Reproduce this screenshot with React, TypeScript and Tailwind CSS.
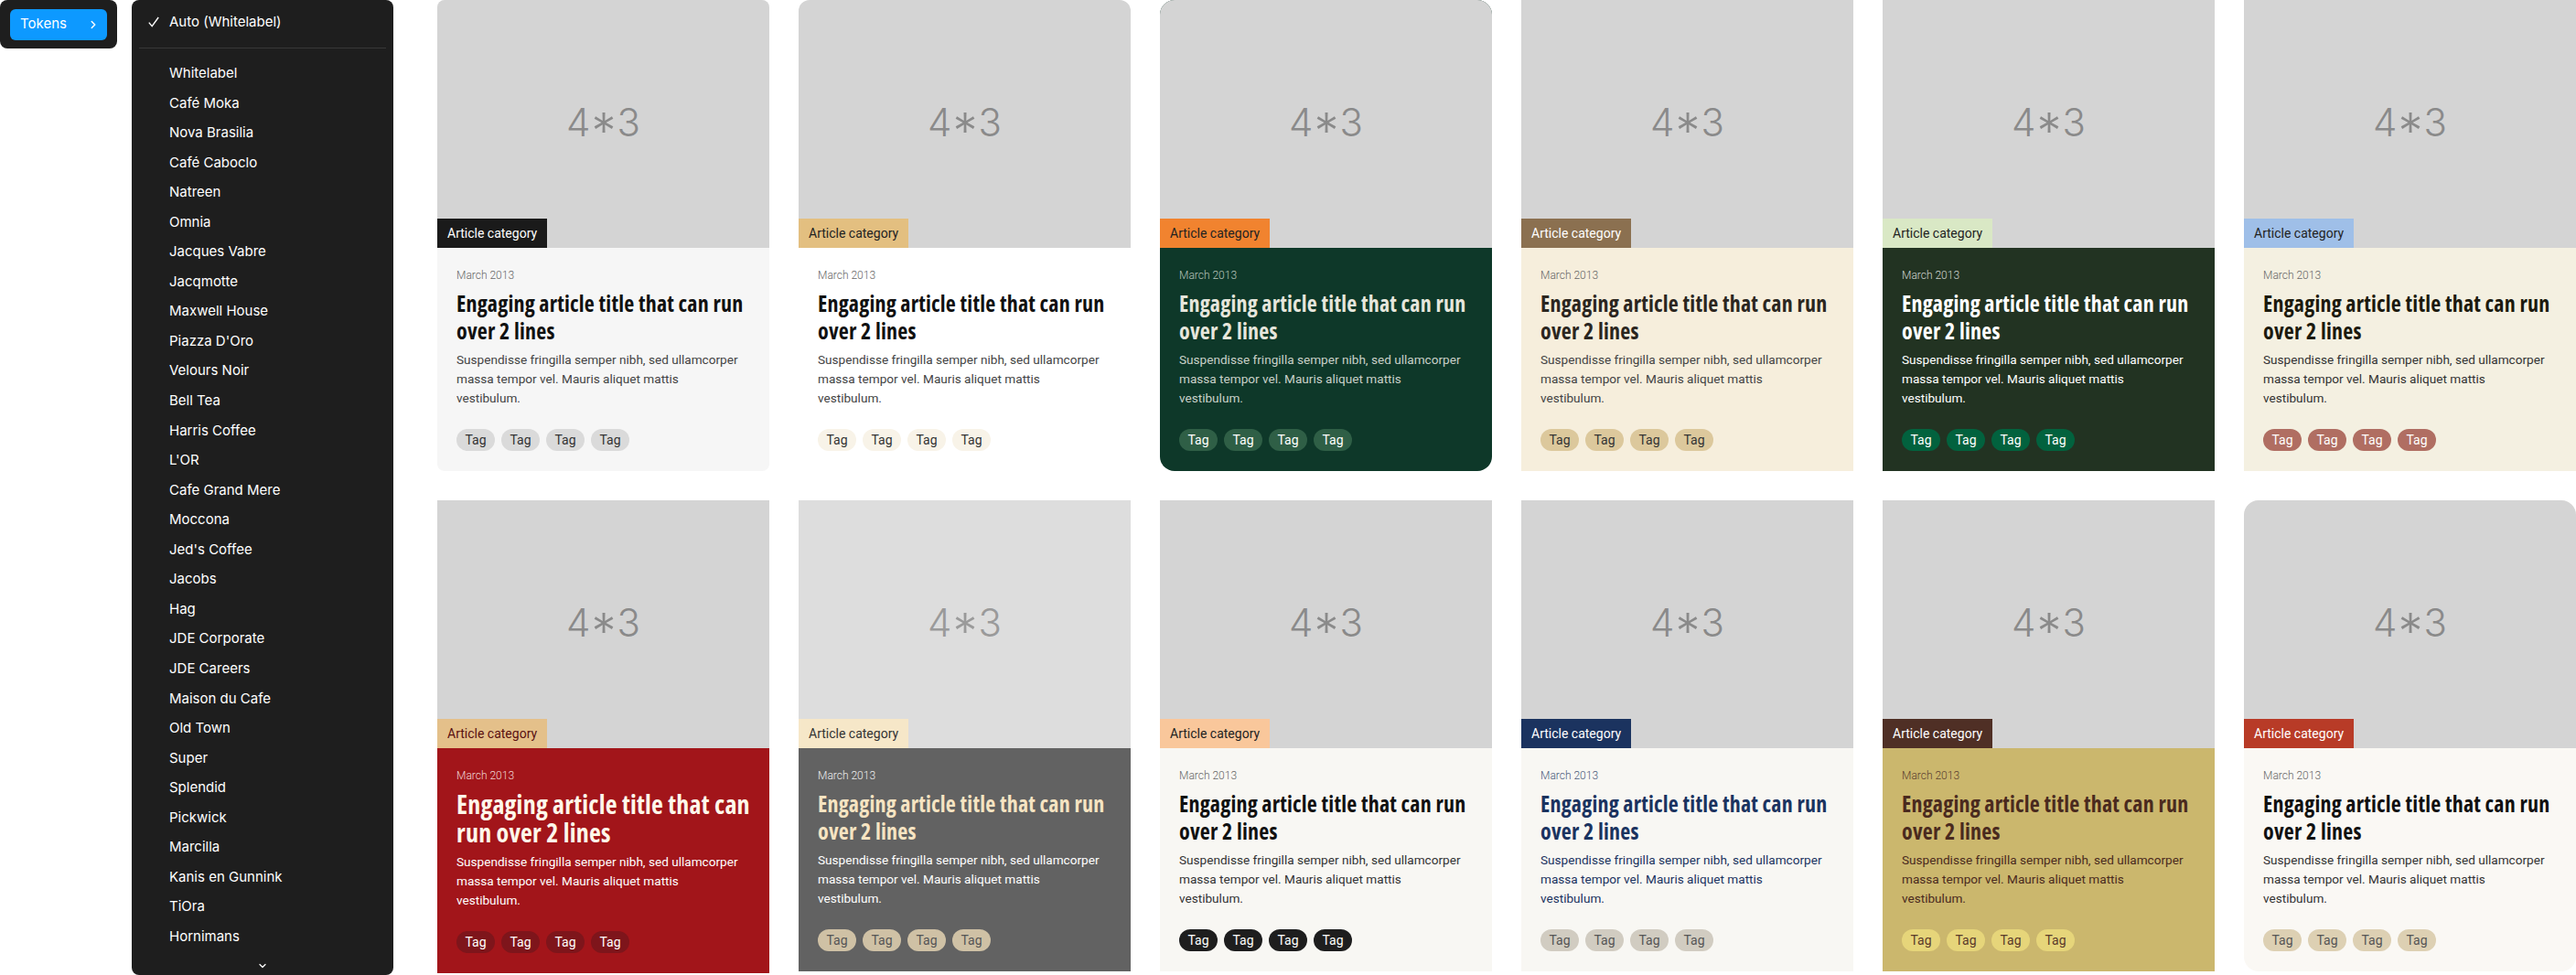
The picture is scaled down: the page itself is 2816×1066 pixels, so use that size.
import { ChevronRight, ChevronDown } from "lucide-react";

interface CardTheme {
  body: string;
  radius: string;
  image: string;
  placeholder: string;
  label: string;
  date: string;
  title: string;
  desc: string;
  tag: string;
  big?: boolean;
}

const brands = [
  "Whitelabel",
  "Café Moka",
  "Nova Brasilia",
  "Café Caboclo",
  "Natreen",
  "Omnia",
  "Jacques Vabre",
  "Jacqmotte",
  "Maxwell House",
  "Piazza D'Oro",
  "Velours Noir",
  "Bell Tea",
  "Harris Coffee",
  "L'OR",
  "Cafe Grand Mere",
  "Moccona",
  "Jed's Coffee",
  "Jacobs",
  "Hag",
  "JDE Corporate",
  "JDE Careers",
  "Maison du Cafe",
  "Old Town",
  "Super",
  "Splendid",
  "Pickwick",
  "Marcilla",
  "Kanis en Gunnink",
  "TiOra",
  "Hornimans",
];

const cards: CardTheme[] = [
  {
    body: "bg-[#f6f6f6]",
    radius: "rounded-lg",
    image: "bg-[#d4d4d4]",
    placeholder: "text-[#8a8a8a]",
    label: "bg-[#1a1a1a] text-white",
    date: "text-[#666666]",
    title: "text-[#111111]",
    desc: "text-[#444444]",
    tag: "bg-[#dadada] text-[#333333]",
  },
  {
    body: "bg-white",
    radius: "rounded-xl",
    image: "bg-[#d4d4d4]",
    placeholder: "text-[#8a8a8a]",
    label: "bg-[#e3bf80] text-[#222222]",
    date: "text-[#666666]",
    title: "text-[#111111]",
    desc: "text-[#444444]",
    tag: "bg-[#f8f3e8] text-[#333333]",
  },
  {
    body: "bg-[#0e3829]",
    radius: "rounded-2xl",
    image: "bg-[#d4d4d4]",
    placeholder: "text-[#8a8a8a]",
    label: "bg-[#f1832f] text-[#222222]",
    date: "text-[#b8c4bc]",
    title: "text-[#e6e6dc]",
    desc: "text-[#c8d0c8]",
    tag: "bg-[#2f5f46] text-white",
  },
  {
    body: "bg-[#f6eedc]",
    radius: "",
    image: "bg-[#d4d4d4]",
    placeholder: "text-[#8a8a8a]",
    label: "bg-[#8b7050] text-white",
    date: "text-[#666666]",
    title: "text-[#2b2620]",
    desc: "text-[#444444]",
    tag: "bg-[#dcc89c] text-[#333333]",
  },
  {
    body: "bg-[#223322]",
    radius: "",
    image: "bg-[#d4d4d4]",
    placeholder: "text-[#8a8a8a]",
    label: "bg-[#d9e8c5] text-[#222222]",
    date: "text-[#d0d4d0]",
    title: "text-white",
    desc: "text-white",
    tag: "bg-[#02623e] text-white",
  },
  {
    body: "bg-[#f4f0e1]",
    radius: "",
    image: "bg-[#d4d4d4]",
    placeholder: "text-[#8a8a8a]",
    label: "bg-[#9fbfe8] text-[#222222]",
    date: "text-[#666666]",
    title: "text-[#1c1a0e]",
    desc: "text-[#333333]",
    tag: "bg-[#b06e62] text-white",
  },
  {
    body: "bg-[#a2151a]",
    radius: "",
    image: "bg-[#d4d4d4]",
    placeholder: "text-[#8a8a8a]",
    label: "bg-[#e4c08a] text-[#5a1010]",
    date: "text-[#f0d6d6]",
    title: "text-[#fff7ea]",
    desc: "text-white",
    tag: "bg-[#7e151b] text-white",
    big: true,
  },
  {
    body: "bg-[#626262]",
    radius: "",
    image: "bg-[#dddddd]",
    placeholder: "text-[#9a9a9a]",
    label: "bg-[#f6e7c8] text-[#333333]",
    date: "text-[#eeeeee]",
    title: "text-[#f6e4c2]",
    desc: "text-white",
    tag: "bg-[#cfc1a5] text-[#555555]",
  },
  {
    body: "bg-[#f8f7f3]",
    radius: "",
    image: "bg-[#d4d4d4]",
    placeholder: "text-[#8a8a8a]",
    label: "bg-[#f9c79b] text-[#222222]",
    date: "text-[#666666]",
    title: "text-[#111111]",
    desc: "text-[#333333]",
    tag: "bg-[#1e1e1e] text-white",
  },
  {
    body: "bg-[#f8f7f3]",
    radius: "",
    image: "bg-[#d4d4d4]",
    placeholder: "text-[#8a8a8a]",
    label: "bg-[#1b335f] text-white",
    date: "text-[#4a5a7a]",
    title: "text-[#1b335f]",
    desc: "text-[#1b335f]",
    tag: "bg-[#d1ccc1] text-[#555555]",
  },
  {
    body: "bg-[#cbb76d]",
    radius: "",
    image: "bg-[#d4d4d4]",
    placeholder: "text-[#8a8a8a]",
    label: "bg-[#4f2f25] text-white",
    date: "text-[#5a4030]",
    title: "text-[#4a2a1e]",
    desc: "text-[#4a2a1e]",
    tag: "bg-[#e6d57a] text-[#5a3a2a]",
  },
  {
    body: "bg-[#faf8f4]",
    radius: "rounded-2xl",
    image: "bg-[#d4d4d4]",
    placeholder: "text-[#8a8a8a]",
    label: "bg-[#b83b27] text-white",
    date: "text-[#666666]",
    title: "text-[#111111]",
    desc: "text-[#333333]",
    tag: "bg-[#ddd0b3] text-[#555555]",
  },
];

const roboto = "font-['Roboto','Liberation_Sans',sans-serif]";
// condensed headline: variable Open Sans squeezed on its width axis
const narrow = "font-['Open_Sans','Liberation_Sans',sans-serif] font-stretch-[75%]";

function ArticleCard({ theme }: { theme: CardTheme }) {
  return (
    <div className={`w-[363px] overflow-hidden flex flex-col ${theme.body} ${theme.radius}`}>
      <div className={`relative h-[271px] flex items-center justify-center ${theme.image}`}>
        <span
          className={`mt-[12px] font-['Inter',sans-serif] font-light text-[42px] leading-none ${theme.placeholder}`}
        >
          4<span className="text-[54px] align-[-13px] mx-[1px]">*</span>3
        </span>
        <span
          className={`absolute left-0 bottom-0 h-[32px] px-[11px] flex items-center text-[14px] ${roboto} ${theme.label}`}
        >
          Article category
        </span>
      </div>
      <div className={`px-[21px] pt-[22px] pb-[22px] ${roboto}`}>
        <div className={`text-[12px] leading-[16px] font-light ${theme.date}`}>March 2013</div>
        <h2
          className={`mt-[8px] font-bold tracking-[0.2px] ${narrow} ${
            theme.big ? "text-[28px] leading-[31px]" : "text-[24px] leading-[30px]"
          } ${theme.title}`}
        >
          Engaging article title that can run over 2 lines
        </h2>
        <p className={`mt-[6px] -mr-[4px] text-[13.6px] leading-[21px] ${theme.desc}`}>
          Suspendisse fringilla semper nibh, sed ullamcorper massa tempor vel. Mauris aliquet
          mattis
          <br />
          vestibulum.
        </p>
        <div className="mt-[23px] flex gap-[7px]">
          {[0, 1, 2, 3].map((i) => (
            <span
              key={i}
              className={`h-[24px] w-[42px] rounded-full flex items-center justify-center text-[14px] ${theme.tag}`}
            >
              Tag
            </span>
          ))}
        </div>
      </div>
    </div>
  );
}

export default function App() {
  return (
    <div className="h-[1066px] w-[2816px] overflow-hidden bg-white flex items-start font-['Inter',sans-serif]">
      {/* plugin trigger */}
      <div className="w-[128px] h-[53px] bg-[#1e1e1e] rounded-lg flex items-center justify-center shrink-0">
        <button className="w-[106px] h-[34px] rounded-[6px] bg-[#0d99ff] text-white text-[15px] flex items-center justify-between pl-[11px] pr-[8px]">
          <span>Tokens</span>
          <ChevronRight className="w-[14px] h-[14px]" strokeWidth={2.5} />
        </button>
      </div>

      {/* theme menu */}
      <div className="ml-[16px] w-[286px] h-[1066px] bg-[#1e1e1e] rounded-lg shrink-0 flex flex-col pt-[8px] text-white text-[15px]">
        <div className="h-[32px] flex items-center">
          <svg
            className="ml-[18px] w-[12px] h-[12px]"
            viewBox="0 0 12 12"
            fill="none"
            stroke="white"
            strokeWidth={1.4}
          >
            <path d="M0.8 6.6 L4.2 10.6 L11.2 1" />
          </svg>
          <span className="ml-[11px]">Auto (Whitelabel)</span>
        </div>
        <div className="mx-[8px] my-[11.5px] h-px bg-[#383838]" />
        {brands.map((b) => (
          <div key={b} className="h-[32.55px] flex items-center pl-[41px] shrink-0">
            {b}
          </div>
        ))}
        <div className="flex justify-center mt-[10px]">
          <ChevronDown className="w-[12px] h-[12px]" strokeWidth={2.5} />
        </div>
      </div>

      {/* cards */}
      <div className="ml-[48px] grid grid-cols-6 gap-x-[32px] gap-y-[32px] items-start">
        {cards.map((c, i) => (
          <ArticleCard key={i} theme={c} />
        ))}
      </div>
    </div>
  );
}
